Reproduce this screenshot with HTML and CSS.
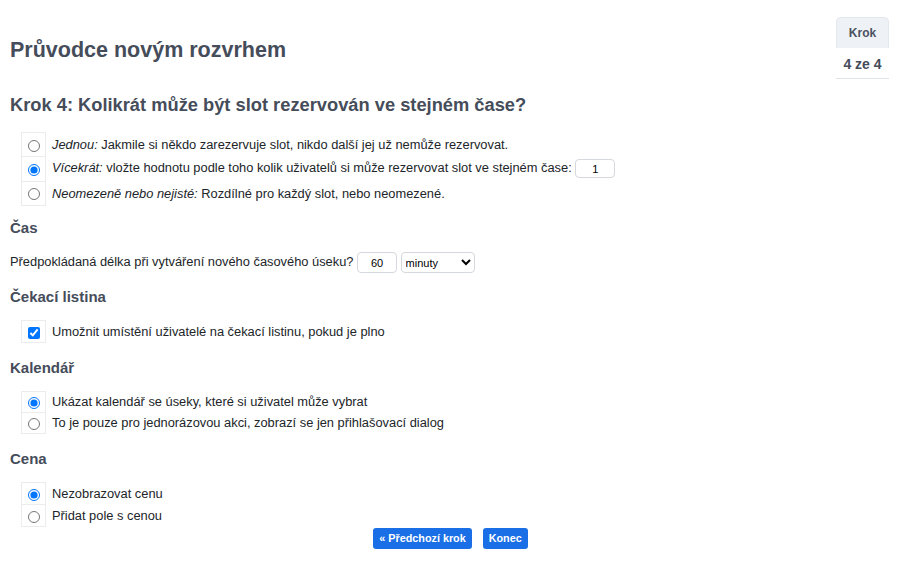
FILE: index.html
```html
<!DOCTYPE html>
<html lang="cs">
<head>
<meta charset="utf-8">
<link rel="stylesheet" href="styles.css">
</head>
<body>
<div class="page">
  <div class="header">
    <h1 class="title">Průvodce novým rozvrhem</h1>
    <div class="step-box">
      <div class="step-label">Krok</div>
      <div class="step-value">4 ze 4</div>
    </div>
  </div>
  <h2 class="question">Krok 4: Kolikrát může být slot rezervován ve stejném čase?</h2>
  <table class="opts opts-first">
    <tr><td class="ctl"><input type="radio" name="cap"></td><td class="lbl"><i>Jednou:</i> Jakmile si někdo zarezervuje slot, nikdo další jej už nemůže rezervovat.</td></tr>
    <tr><td class="ctl"><input type="radio" name="cap" checked></td><td class="lbl"><i>Vícekrát:</i> vložte hodnotu podle toho kolik uživatelů si může rezervovat slot ve stejném čase: <input class="num" type="text" value="1"></td></tr>
    <tr><td class="ctl"><input type="radio" name="cap"></td><td class="lbl"><i>Neomezeně nebo nejisté:</i> Rozdílné pro každý slot, nebo neomezené.</td></tr>
  </table>

  <h3 class="section section-first">Čas</h3>
  <div class="time-row">Předpokládaná délka při vytváření nového časového úseku? <input class="num num-time" type="text" value="60"> <select class="unit"><option>minuty</option></select></div>

  <h3 class="section">Čekací listina</h3>
  <table class="opts">
    <tr><td class="ctl"><input type="checkbox" checked></td><td class="lbl">Umožnit umístění uživatelé na čekací listinu, pokud je plno</td></tr>
  </table>

  <h3 class="section">Kalendář</h3>
  <table class="opts opts-tight">
    <tr><td class="ctl"><input type="radio" name="cal" checked></td><td class="lbl">Ukázat kalendář se úseky, které si uživatel může vybrat</td></tr>
    <tr><td class="ctl"><input type="radio" name="cal"></td><td class="lbl">To je pouze pro jednorázovou akci, zobrazí se jen přihlašovací dialog</td></tr>
  </table>

  <h3 class="section">Cena</h3>
  <table class="opts opts-last">
    <tr><td class="ctl"><input type="radio" name="price" checked></td><td class="lbl">Nezobrazovat cenu</td></tr>
    <tr><td class="ctl"><input type="radio" name="price"></td><td class="lbl">Přidat pole s cenou</td></tr>
  </table>

  <div class="actions">
    <button class="btn">« Předchozí krok</button>
    <button class="btn">Konec</button>
  </div>
</div>
</body>
</html>
```
FILE: styles.css
```css
* { box-sizing: border-box; }
html, body { margin: 0; padding: 0; background: #fff; }
body {
  font-family: "Liberation Sans", Arial, sans-serif;
  font-size: 12.85px;
  color: #212529;
}
.page { padding: 0 10px; }
.header {
  display: flex;
  justify-content: space-between;
  align-items: flex-start;
  padding-top: 17px;
}
.title {
  margin: 21px 0 0;
  font-size: 21.5px;
  line-height: 25px;
  font-weight: bold;
  color: #454c5a;
}
.step-box {
  width: 53px;
  margin-right: 1px;
  text-align: center;
}
.step-label {
  background: #eef1f6;
  border: 1px solid #e3e7ee;
  border-bottom: none;
  border-radius: 5px 5px 0 0;
  height: 31px;
  line-height: 30px;
  font-size: 12px;
  font-weight: bold;
  color: #4b5261;
}
.step-value {
  height: 31px;
  line-height: 32px;
  border-bottom: 1px solid #dfe3ea;
  font-size: 14px;
  font-weight: bold;
  color: #454c5a;
}
.question {
  margin: 15px 0 0;
  height: 22px;
  line-height: 22px;
  font-size: 18.3px;
  font-weight: bold;
  color: #454c5a;
}
.section {
  margin: 14px 0 14px;
  height: 18px;
  line-height: 18px;
  font-size: 15px;
  font-weight: bold;
  color: #454c5a;
}
.opts + .section { margin-top: 16px; }
.opts + .section-first { margin-top: 13px; }
.opts {
  border-collapse: collapse;
  margin-left: 11px;
}
.opts-first { margin-top: 16px; }
.opts-last { margin-bottom: 1px; }
.opts td { padding: 0; vertical-align: middle; }
.ctl {
  width: 24px;
  border: 1px solid #ececec;
  text-align: center;
}
.ctl input { margin: 0; width: 12px; height: 12px; vertical-align: middle; }
.opts tr { height: 22px; }
.opts-tight tr { height: 21px; }
.opts-first tr { height: 24.3px; }
.lbl { padding-left: 6px !important; }
.num {
  width: 40px;
  height: 19px;
  border: 1px solid #d5d8dc;
  border-radius: 4px;
  text-align: center;
  font: 11px "Liberation Sans", Arial, sans-serif;
  padding: 0;
  vertical-align: middle;
}
.time-row { margin-bottom: 16px; height: 21px; line-height: 21px; }
.num-time { height: 21px; }
.unit {
  width: 74px;
  height: 21px;
  border: 1px solid #d5d8dc;
  border-radius: 4px;
  background: #fff;
  font: 11px "Liberation Sans", Arial, sans-serif;
  vertical-align: middle;
}
.actions {
  display: flex;
  justify-content: center;
  gap: 11px;
  margin-top: 0;
  padding-left: 1px;
}
.btn {
  background: #1a6fe6;
  color: #fff;
  border: none;
  border-radius: 3px;
  height: 21px;
  padding: 0 6px;
  font: bold 10.8px "Liberation Sans", Arial, sans-serif;
}
```
